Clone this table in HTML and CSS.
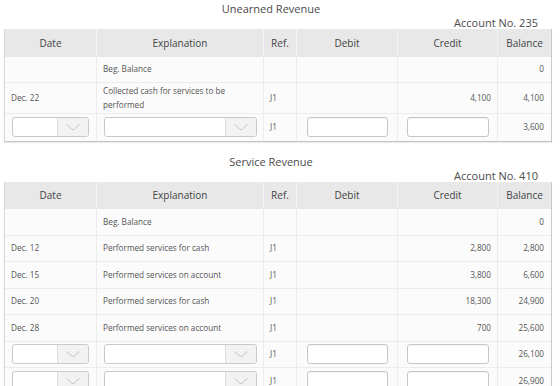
FILE: index.html
```html
<!DOCTYPE html>
<html>
<head>
<meta charset="utf-8">
<link rel="stylesheet" href="styles.css">
</head>
<body>
<div class="page">
  <section class="ledger">
    <div class="heading">
      <div class="title">Unearned Revenue</div>
      <div class="acct">Account No. 235</div>
    </div>
    <table class="tbl">
      <colgroup><col class="c-date"><col class="c-exp"><col class="c-ref"><col class="c-deb"><col class="c-cre"><col class="c-bal"></colgroup>
      <thead>
        <tr><th>Date</th><th>Explanation</th><th>Ref.</th><th>Debit</th><th>Credit</th><th>Balance</th></tr>
      </thead>
      <tbody>
        <tr><td></td><td>Beg. Balance</td><td></td><td></td><td></td><td class="num bal">0</td></tr>
        <tr class="wrap"><td>Dec. 22</td><td>Collected cash for services to be performed</td><td>J1</td><td></td><td class="num">4,100</td><td class="num bal">4,100</td></tr>
        <tr class="inrow">
          <td class="ctr"><div class="sel w-date"><span class="sel-val"></span><span class="sel-btn"><svg width="14" height="7" viewBox="0 0 14 7"><polyline points="0.5,0.5 7,6 13.5,0.5" fill="none" stroke="#c4c4c4" stroke-width="1"/></svg></span></div></td>
          <td class="ctr"><div class="sel w-exp"><span class="sel-val"></span><span class="sel-btn"><svg width="14" height="7" viewBox="0 0 14 7"><polyline points="0.5,0.5 7,6 13.5,0.5" fill="none" stroke="#c4c4c4" stroke-width="1"/></svg></span></div></td>
          <td>J1</td>
          <td class="ctr"><div class="inp w-deb"></div></td>
          <td class="ctr"><div class="inp w-cre"></div></td>
          <td class="num bal">3,600</td>
        </tr>
      </tbody>
    </table>
  </section>

  <section class="ledger second">
    <div class="heading">
      <div class="title">Service Revenue</div>
      <div class="acct">Account No. 410</div>
    </div>
    <table class="tbl">
      <colgroup><col class="c-date"><col class="c-exp"><col class="c-ref"><col class="c-deb"><col class="c-cre"><col class="c-bal"></colgroup>
      <thead>
        <tr><th>Date</th><th>Explanation</th><th>Ref.</th><th>Debit</th><th>Credit</th><th>Balance</th></tr>
      </thead>
      <tbody>
        <tr><td></td><td>Beg. Balance</td><td></td><td></td><td></td><td class="num bal">0</td></tr>
        <tr><td>Dec. 12</td><td>Performed services for cash</td><td>J1</td><td></td><td class="num">2,800</td><td class="num bal">2,800</td></tr>
        <tr><td>Dec. 15</td><td>Performed services on account</td><td>J1</td><td></td><td class="num">3,800</td><td class="num bal">6,600</td></tr>
        <tr><td>Dec. 20</td><td>Performed services for cash</td><td>J1</td><td></td><td class="num">18,300</td><td class="num bal">24,900</td></tr>
        <tr><td>Dec. 28</td><td>Performed services on account</td><td>J1</td><td></td><td class="num">700</td><td class="num bal">25,600</td></tr>
        <tr class="inrow">
          <td class="ctr"><div class="sel w-date"><span class="sel-val"></span><span class="sel-btn"><svg width="14" height="7" viewBox="0 0 14 7"><polyline points="0.5,0.5 7,6 13.5,0.5" fill="none" stroke="#c4c4c4" stroke-width="1"/></svg></span></div></td>
          <td class="ctr"><div class="sel w-exp"><span class="sel-val"></span><span class="sel-btn"><svg width="14" height="7" viewBox="0 0 14 7"><polyline points="0.5,0.5 7,6 13.5,0.5" fill="none" stroke="#c4c4c4" stroke-width="1"/></svg></span></div></td>
          <td>J1</td>
          <td class="ctr"><div class="inp w-deb"></div></td>
          <td class="ctr"><div class="inp w-cre"></div></td>
          <td class="num bal">26,100</td>
        </tr>
        <tr class="inrow">
          <td class="ctr"><div class="sel w-date"><span class="sel-val"></span><span class="sel-btn"><svg width="14" height="7" viewBox="0 0 14 7"><polyline points="0.5,0.5 7,6 13.5,0.5" fill="none" stroke="#c4c4c4" stroke-width="1"/></svg></span></div></td>
          <td class="ctr"><div class="sel w-exp"><span class="sel-val"></span><span class="sel-btn"><svg width="14" height="7" viewBox="0 0 14 7"><polyline points="0.5,0.5 7,6 13.5,0.5" fill="none" stroke="#c4c4c4" stroke-width="1"/></svg></span></div></td>
          <td>J1</td>
          <td class="ctr"><div class="inp w-deb"></div></td>
          <td class="ctr"><div class="inp w-cre"></div></td>
          <td class="num bal">26,900</td>
        </tr>
      </tbody>
    </table>
  </section>
</div>
</body>
</html>
```

FILE: styles.css
```css
html, body {
  margin: 0;
  padding: 0;
  background: #ffffff;
}
body {
  font-family: "Open Sans", "Liberation Sans", sans-serif;
  color: #555555;
  overflow: hidden;
}
.page {
  padding-left: 4px;
  width: 548px;
}
.ledger {
  padding-top: 1px;
}
.ledger.second {
  margin-top: 11px;
}
.heading {
  padding-right: 14px;
}
.title {
  text-align: center;
  font-size: 11px;
  line-height: 16px;
  color: #4a4a4a;
}
.acct {
  text-align: right;
  font-size: 11px;
  line-height: 12px;
  color: #4a4a4a;
}
.tbl {
  width: 548px;
  table-layout: fixed;
  border-collapse: separate;
  border-spacing: 0;
  border-left: 1px solid #d6d6d6;
  border-right: 1px solid #c8c8c8;
  border-bottom: 1px solid #c4c4c4;
  box-shadow: 0 1px 1px rgba(0, 0, 0, 0.08);
  background: #fbfbfb;
}
.c-date { width: 92px; }
.c-exp { width: 167px; }
.c-ref { width: 33px; }
.c-deb { width: 101px; }
.c-cre { width: 100px; }
.c-bal { width: 53px; }

.tbl thead tr {
  height: 27.5px;
}
.tbl th {
  background: #e8e8e8;
  font-size: 10px;
  font-weight: 400;
  color: #444444;
  text-align: center;
  padding: 0 4px;
  border-right: 1px solid #f3f3f3;
}
.tbl th:last-child {
  border-right: 0;
}
.tbl tbody tr {
  height: 26.5px;
}
.tbl td {
  font-size: 8.2px;
  line-height: 14px;
  color: #555555;
  padding: 1px 6px;
  vertical-align: middle;
  border-right: 1px solid #ececec;
  border-bottom: 1px solid #ececec;
  white-space: normal;
}
.tbl td:last-child {
  border-right: 0;
}
.tbl tbody tr:last-child td {
  border-bottom: 0;
}
.tbl tbody tr.wrap {
  height: 30px;
}
.tbl td.num {
  text-align: right;
}
.tbl td.bal {
  padding-right: 7px;
}
.tbl td.ctr {
  padding: 0;
}
.sel {
  display: flex;
  height: 20px;
  margin: 0 auto;
  border: 1px solid #c9c9c9;
  border-radius: 3px;
  background: #ffffff;
  box-sizing: border-box;
  overflow: hidden;
}
.sel-val {
  flex: 1;
}
.sel-btn {
  width: 30px;
  background: #f2f2f2;
  border-left: 1px solid #dcdcdc;
  display: flex;
  align-items: center;
  justify-content: center;
}
.inp {
  height: 20px;
  margin: 0 auto;
  border: 1px solid #c6c6c6;
  border-radius: 3px;
  background: #ffffff;
  box-sizing: border-box;
  box-shadow: inset 0 1px 1px rgba(0, 0, 0, 0.04);
}
.w-date { width: 77px; }
.w-exp { width: 153px; }
.w-deb { width: 81px; }
.w-cre { width: 82px; }
```
